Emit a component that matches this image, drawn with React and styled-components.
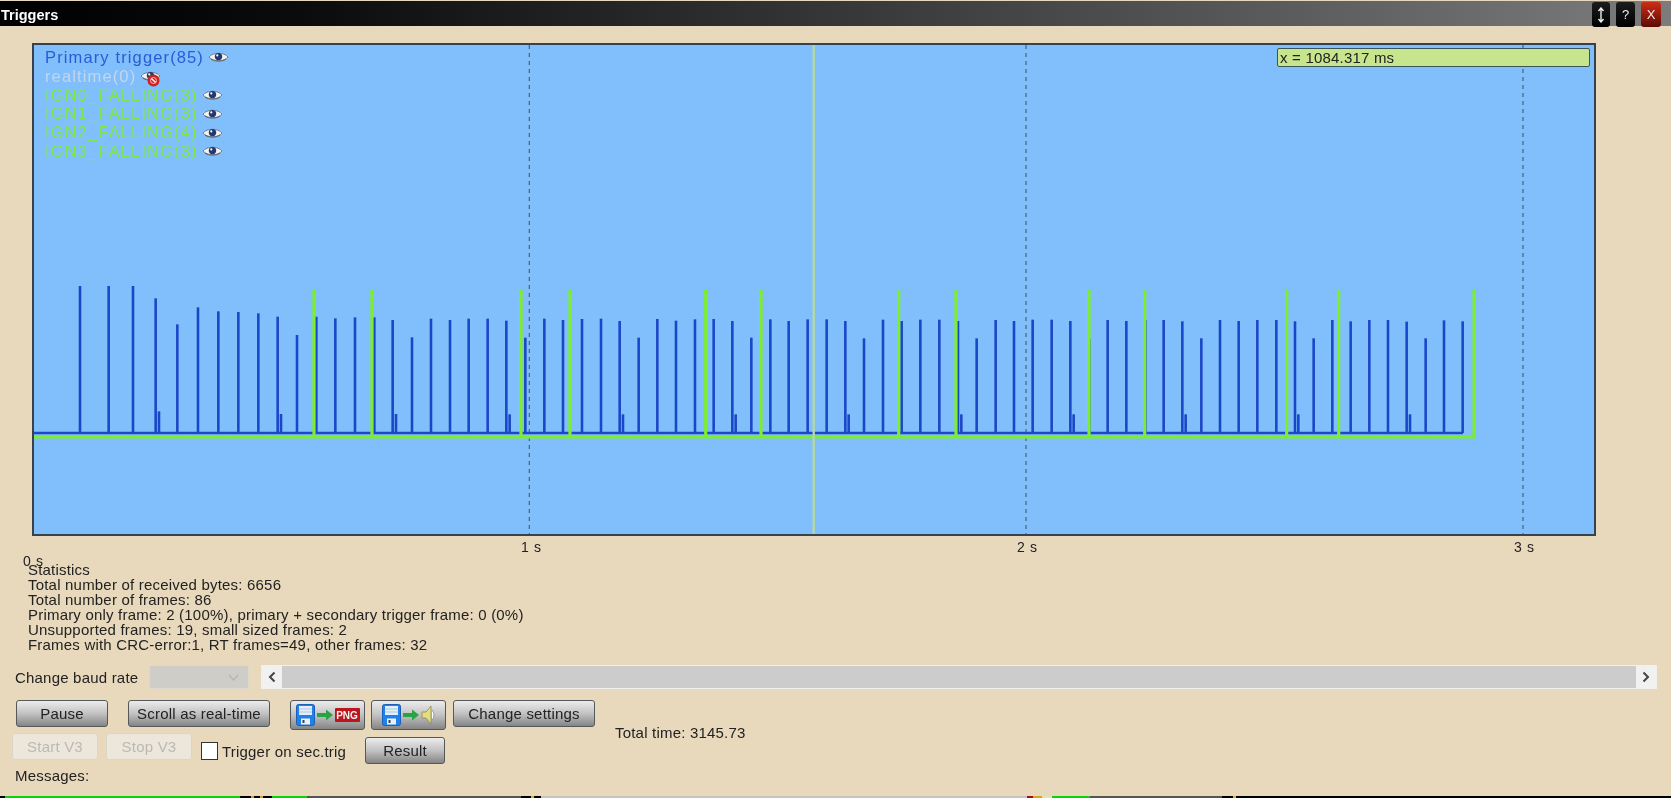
import React from "react";
import styled, { createGlobalStyle } from "styled-components";

const Global = createGlobalStyle`
  html, body { margin: 0; padding: 0; background: #e8d9bd; overflow: hidden; }
  * { box-sizing: border-box; }
`;

const App_ = styled.div`
  width: 1671px;
  height: 798px;
  display: flex;
  flex-direction: column;
  overflow: hidden;
  background: #e8d9bd;
  color: #222;
  font-family: "Liberation Sans", Arial, sans-serif;
  font-size: 15px;
  letter-spacing: 0.2px;
  filter: blur(0.35px);
`;

const TitleBar = styled.header`
  height: 25px;
  margin-top: 1px;
  flex: none;
  display: flex;
  align-items: center;
  padding: 3px 10px 0 1px;
  background: linear-gradient(90deg, #000 0, #0b0b0b 18%, #5a5a5a 76%, #7c7c7c 100%);
  color: #fff;
  font-weight: bold;
  font-size: 14.5px;
  letter-spacing: 0;
`;

const WindowButtons = styled.div`
  margin-left: auto;
  display: flex;
  gap: 6px;
  align-self: flex-start;
  margin-top: -2px;
`;

const WindowButton = styled.div`
  width: ${(p) => p.$w}px;
  height: 25px;
  border-radius: 3px;
  display: flex;
  align-items: center;
  justify-content: center;
  font-weight: normal;
  font-size: 13px;
  color: #eee;
  background: ${(p) => (p.$danger ? "linear-gradient(180deg,#cf2c16,#5a0c04)" : "linear-gradient(180deg,#1c1c1c,#000)")};
`;

const Plot = styled.section`
  position: relative;
  flex: none;
  width: 1564px;
  height: 493px;
  margin: 17px 0 0 32px;
  border: 2px solid #36424d;
  background: #80bffb;
`;

const PlotSvg = styled.svg`
  display: block;
  width: 100%;
  height: 100%;
`;

const Legend = styled.div`
  position: absolute;
  left: 11px;
  top: 3px;
  display: flex;
  flex-direction: column;
`;

const LegendRow = styled.div`
  height: 18.8px;
  display: flex;
  align-items: center;
  gap: 4px;
  font-size: 16.5px;
  letter-spacing: 1.13px;
  color: ${(p) => p.$color};
  position: relative;
`;

const ValueBox = styled.div`
  position: absolute;
  left: 1243px;
  top: 3px;
  width: 313px;
  height: 19px;
  padding-left: 2px;
  line-height: 18px;
  font-size: 15px;
  color: #222;
  background: #c7e58c;
  border: 1.5px solid #3a5558;
  border-radius: 2px;
`;

const Axis = styled.div`
  position: relative;
  flex: none;
  height: 26px;
`;

const AxisLabel = styled.span`
  position: absolute;
  left: ${(p) => p.$x}px;
  top: ${(p) => p.$y}px;
  line-height: 16px;
  font-size: 14px;
  letter-spacing: 0.6px;
`;

const Stats = styled.div`
  flex: none;
  padding-left: 28px;
  line-height: 15px;
`;

const BaudRow = styled.div`
  flex: none;
  margin-top: 13px;
  height: 24px;
  padding: 0 14px 0 15px;
  display: flex;
  align-items: center;
`;

const BaudLabel = styled.span`
  width: 134px;
  flex: none;
`;

const BaudSelect = styled.div`
  width: 100px;
  height: 24px;
  flex: none;
  display: flex;
  align-items: center;
  justify-content: flex-end;
  padding-right: 9px;
  background: #cfcdc8;
  border: 1px solid #dcd8cc;
`;

const Scrollbar = styled.div`
  flex: 1;
  height: 24px;
  margin-left: 12px;
  display: flex;
  background: #cccccc;
  border: 1px solid #f1f0ec;
`;

const ScrollArrow = styled.div`
  width: 20px;
  flex: none;
  display: flex;
  align-items: center;
  justify-content: center;
  background: #f1f1f1;
`;

const ScrollTrack = styled.div`
  flex: 1;
`;

const Controls = styled.div`
  flex: none;
  margin-top: 11px;
  display: flex;
  align-items: center;
`;

const ControlColumn = styled.div`
  display: flex;
  flex-direction: column;
  gap: 3px;
`;

const ButtonRow = styled.div`
  display: flex;
  align-items: flex-start;
  height: ${(p) => p.$h}px;
  padding-left: ${(p) => p.$pad}px;
`;

const Button = styled.button`
  width: ${(p) => p.$w}px;
  height: ${(p) => p.$h || 27}px;
  margin-left: ${(p) => p.$ml || 0}px;
  margin-top: ${(p) => p.$mt || 0}px;
  flex: none;
  padding: 0;
  display: flex;
  align-items: center;
  justify-content: center;
  font-family: inherit;
  font-size: 15px;
  letter-spacing: 0.2px;
  color: #222;
  background: linear-gradient(180deg, #ececec 0%, #c2c2c2 50%, #858585 100%);
  border: 1.5px solid #55585a;
  border-radius: 3px;
  &:disabled {
    color: #b9b9b6;
    background: #ece7da;
    border: 1.5px solid #dad6ca;
  }
`;

const CheckLabel = styled.label`
  display: flex;
  align-items: center;
  gap: 4px;
  margin: 9px 0 0 9px;
  height: 18px;
  width: 164px;
  flex: none;
  white-space: nowrap;
`;

const CheckBox = styled.span`
  width: 17px;
  height: 18px;
  flex: none;
  background: #fff;
  border: 1.5px solid #333;
`;

const TotalTime = styled.div`
  margin-left: 20px;
`;

const Messages = styled.div`
  flex: none;
  margin-top: 4px;
  padding-left: 15px;
  line-height: 16px;
`;

const LogStrip = styled.div`
  flex: none;
  margin-top: auto;
  height: 2px;
  display: flex;
  overflow: hidden;
`;

const LogChunk = styled.div`
  width: ${(p) => p.$w}px;
  flex: ${(p) => (p.$fill ? 1 : "none")};
  background: ${(p) => p.$c};
`;

const Eye = ({ w = 21 }) => (
  <svg width={w} height="12" viewBox="0 0 21 12">
    <path d="M1 6C5 1 16 1 20 6C16 11 5 11 1 6Z" fill="#f1f3f5" stroke="#77808a" strokeWidth="1" />
    <circle cx="10.5" cy="5.6" r="3.7" fill="#23386f" />
    <circle cx="9.3" cy="4.4" r="1.1" fill="#fff" />
    <path d="M3 8.2C7 10.8 14 10.8 18 8.2" fill="none" stroke="#555" strokeWidth="0.8" />
  </svg>
);

const NoBadge = styled.svg`
  position: absolute;
  left: 102px;
  top: 7px;
`;

const Ban = () => (
  <NoBadge width="13" height="13" viewBox="0 0 13 13">
    <circle cx="6.5" cy="6.5" r="6" fill="#d3201f" />
    <circle cx="6.5" cy="6.5" r="3" fill="none" stroke="#f4c0c0" strokeWidth="1" />
    <path d="M4.4 4.4L8.6 8.6" stroke="#fff" strokeWidth="1.4" />
  </NoBadge>
);

const Floppy = () => (
  <svg width="19" height="22" viewBox="0 0 19 22">
    <rect x="0.5" y="0.5" width="18" height="21" rx="2" fill="#2280ea" stroke="#1a5fb8" />
    <rect x="3" y="2" width="13" height="9" fill="#e4eef8" />
    <path d="M3 5H16M3 8H16" stroke="#a8c8e8" strokeWidth="1" />
    <rect x="5" y="14.5" width="9" height="6" fill="#e9f0f7" />
    <rect x="6.5" y="16" width="2" height="3" fill="#345" />
  </svg>
);

const Arrow = () => (
  <svg width="16" height="12" viewBox="0 0 16 12">
    <path d="M0 4H9V0.5L16 6L9 11.5V8H0Z" fill="#2aa344" />
  </svg>
);

const IconGroup = styled.span`
  display: flex;
  align-items: center;
  gap: 2px;
`;

const PngBadge = styled.span`
  width: 25px;
  height: 14px;
  display: flex;
  align-items: center;
  justify-content: center;
  background: #b9161d;
  color: #f3f3f3;
  font-size: 10px;
  font-weight: bold;
  letter-spacing: 0;
  border-radius: 1px;
`;

const Speaker = () => (
  <svg width="15" height="22" viewBox="0 0 15 22">
    <path d="M1 8H5L10 2V20L5 14H1Z" fill="#e3dc84" stroke="#8b8a55" strokeWidth="0.8" />
    <path d="M11 6C13.5 8.5 13.5 13.5 11 16" fill="#fff" stroke="#888" strokeWidth="0.8" />
  </svg>
);

const seg = (o, list) => list.map(([px, py]) => [o + px / 3, 270 + py / 3]);

const blueSpikes = [
  ...seg(30, [[150,48],[236,48],[309,48],[377,85],[387,424],[442,163],[504,112],[565,124],[625,126],[685,130],[743,140],[753,432],[801,195],[859,140],[916,145],[975,142],[1033,142],[1088,150],[1098,432],[1146,202],[1203,146],[1260,150],[1316,146],[1373,146],[1429,152],[1439,433],[1486,203]]),
  ...seg(500, [[133,146],[189,150],[246,147],[303,146],[359,153],[369,433],[416,203],[472,147],[528,152],[585,148],[641,147],[697,153],[707,433],[754,203],[811,148],[866,153],[923,148],[980,148],[1036,153],[1046,433],[1092,205],[1149,149],[1205,153],[1261,149],[1318,149],[1374,153],[1384,433],[1430,205],[1487,150]]),
  ...seg(1000, [[42,153],[98,149],[155,149],[211,153],[221,433],[268,205],[323,150],[379,153],[436,150],[491,150],[547,154],[557,433],[604,205],[660,150],[716,153],[772,150],[829,150],[885,154],[895,433],[941,205],[997,150],[1052,154],[1108,150],[1164,150],[1220,155],[1230,433],[1277,205],[1332,151],[1388,154]]),
];

const greenSpikes = [314, 372, 521, 570, 705.7, 761, 898.7, 956, 1089, 1144.7, 1286.7, 1338.7, 1474.3];
const gridLines = [33, 529.3, 1026, 1523];

const legend = [
  { label: "Primary trigger(85)", color: "#2a5bd6" },
  { label: "realtime(0)", color: "#c3d5ea", off: true },
  { label: "IGN0_FALLING(3)", color: "#7de84a" },
  { label: "IGN1_FALLING(3)", color: "#7de84a" },
  { label: "IGN2_FALLING(4)", color: "#7de84a" },
  { label: "IGN3_FALLING(3)", color: "#7de84a" },
];

const stats = [
  "Statistics",
  "Total number of received bytes: 6656",
  "Total number of frames: 86",
  "Primary only frame: 2 (100%), primary + secondary trigger frame: 0 (0%)",
  "Unsupported frames: 19, small sized frames: 2",
  "Frames with CRC-error:1, RT frames=49, other frames: 32",
];

const strip = [
  [5, "#000"], [235, "#10d010"], [11, "#000"], [3, "#d9a020"], [6, "#000"], [3, "#d9a020"], [9, "#000"],
  [35, "#10d010"], [214, "#555"], [10, "#000"], [3, "#e0b020"], [7, "#000"], [486, "#c4c4c4"],
  [6, "#a01010"], [9, "#e0a020"], [10, "#e8e0b0"], [38, "#10d010"], [132, "#555"], [11, "#000"], [3, "#e0b020"],
];

export default function App() {
  return (
    <App_>
      <Global />
      <TitleBar>
        Triggers
        <WindowButtons>
          <WindowButton $w={18}>
            <svg width="8" height="16" viewBox="0 0 8 16">
              <path d="M4 1V15M1.5 4L4 1L6.5 4M1.5 12L4 15L6.5 12" fill="none" stroke="#eee" strokeWidth="1.4" />
            </svg>
          </WindowButton>
          <WindowButton $w={19}>?</WindowButton>
          <WindowButton $w={20} $danger>X</WindowButton>
        </WindowButtons>
      </TitleBar>

      <Plot>
        <PlotSvg viewBox="34 45 1560 489" preserveAspectRatio="none">
          {gridLines.map((x) => (
            <line key={x} x1={x} x2={x} y1="45" y2="534" stroke="#55606c" strokeWidth="1.2" strokeDasharray="4 4" />
          ))}
          <line x1="33" x2="1463" y1="433" y2="433" stroke="#1f48c4" strokeWidth="2.4" />
          {blueSpikes.map(([x, y]) => (
            <line key={x} x1={x} x2={x} y1={y} y2="433" stroke="#1a47c8" strokeWidth="2.6" />
          ))}
          <path d="M33 437H1474.3V290" fill="none" stroke="#7cee2c" strokeWidth="3.2" />
          {greenSpikes.map((x) => (
            <line key={x} x1={x} x2={x} y1="290" y2="437" stroke="#7cee2c" strokeWidth="3.2" />
          ))}
          <line x1="813.7" x2="813.7" y1="45" y2="534" stroke="#b4d8a6" strokeWidth="2.4" />
        </PlotSvg>
        <Legend>
          {legend.map((l) => (
            <LegendRow key={l.label} $color={l.color}>
              {l.label}
              <Eye />
              {l.off && <Ban />}
            </LegendRow>
          ))}
        </Legend>
        <ValueBox>x = 1084.317 ms</ValueBox>
      </Plot>

      <Axis>
        <AxisLabel $x={23} $y={17}>0 s</AxisLabel>
        <AxisLabel $x={521} $y={3}>1 s</AxisLabel>
        <AxisLabel $x={1017} $y={3}>2 s</AxisLabel>
        <AxisLabel $x={1514} $y={3}>3 s</AxisLabel>
      </Axis>

      <Stats>
        {stats.map((s) => (
          <div key={s}>{s}</div>
        ))}
      </Stats>

      <BaudRow>
        <BaudLabel>Change baud rate</BaudLabel>
        <BaudSelect>
          <svg width="11" height="7" viewBox="0 0 11 7">
            <path d="M1 1L5.5 6L10 1" fill="none" stroke="#b5b5b5" strokeWidth="1.2" />
          </svg>
        </BaudSelect>
        <Scrollbar>
          <ScrollArrow>
            <svg width="8" height="12" viewBox="0 0 8 12">
              <path d="M6.5 1.5L2 6L6.5 10.5" fill="none" stroke="#444" strokeWidth="2" />
            </svg>
          </ScrollArrow>
          <ScrollTrack />
          <ScrollArrow>
            <svg width="8" height="12" viewBox="0 0 8 12">
              <path d="M1.5 1.5L6 6L1.5 10.5" fill="none" stroke="#444" strokeWidth="2" />
            </svg>
          </ScrollArrow>
        </Scrollbar>
      </BaudRow>

      <Controls>
        <ControlColumn>
          <ButtonRow $h={30} $pad={16}>
            <Button $w={92}>Pause</Button>
            <Button $w={142} $ml={20}>Scroll as real-time</Button>
            <Button $w={75} $h={30} $ml={20}>
              <IconGroup><Floppy /><Arrow /><PngBadge>PNG</PngBadge></IconGroup>
            </Button>
            <Button $w={75} $h={30} $ml={6}>
              <IconGroup><Floppy /><Arrow /><Speaker /></IconGroup>
            </Button>
            <Button $w={142} $ml={7}>Change settings</Button>
          </ButtonRow>
          <ButtonRow $h={31} $pad={12}>
            <Button $w={86} disabled>Start V3</Button>
            <Button $w={86} $ml={8} disabled>Stop V3</Button>
            <CheckLabel>
              <CheckBox />
              Trigger on sec.trig
            </CheckLabel>
            <Button $w={80} $mt={4}>Result</Button>
          </ButtonRow>
        </ControlColumn>
        <TotalTime>Total time: 3145.73</TotalTime>
      </Controls>

      <Messages>Messages:</Messages>

      <LogStrip>
        {strip.map(([w, c], i) => (
          <LogChunk key={i} $w={w} $c={c} />
        ))}
        <LogChunk $fill $c="#000" />
      </LogStrip>
    </App_>
  );
}
